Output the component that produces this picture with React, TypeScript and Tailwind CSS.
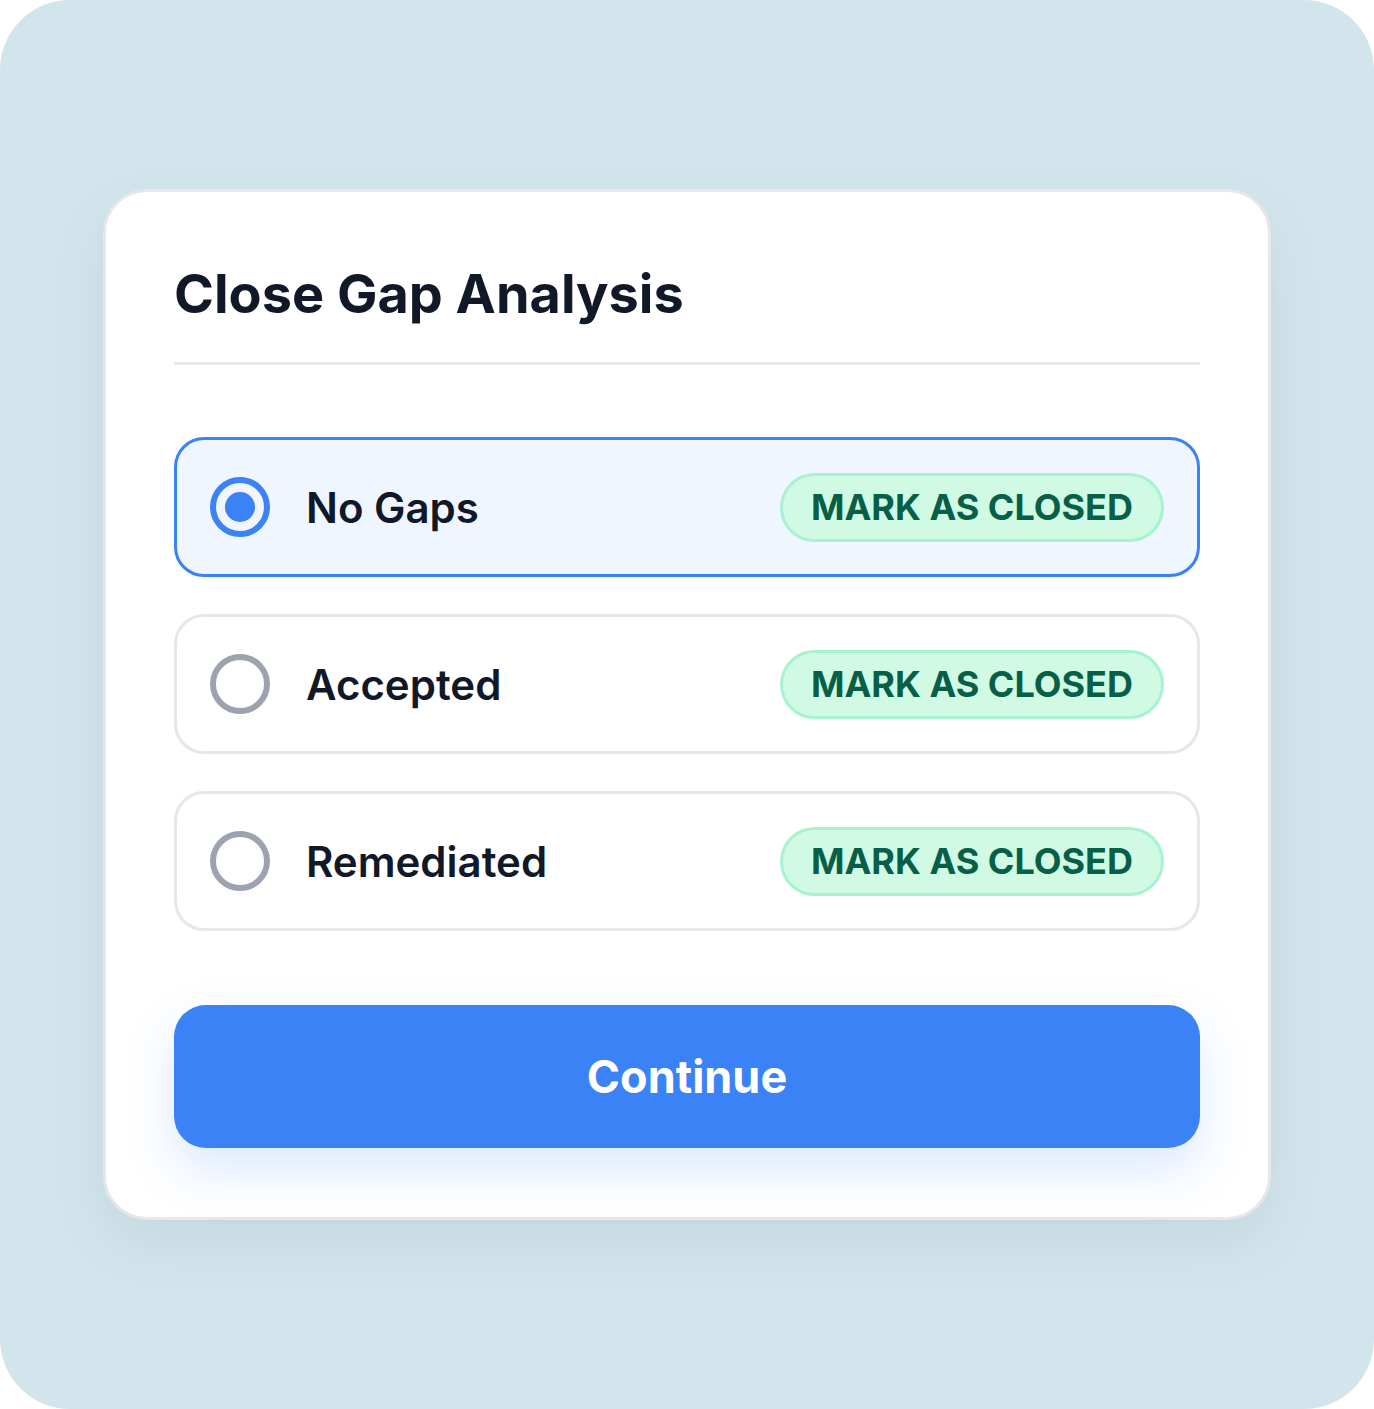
import { useState } from "react"

const options = ["No Gaps", "Accepted", "Remediated"]

export default function App() {
  const [selected, setSelected] = useState(0)

  return (
    <div className="w-[1374px] h-[1409px] bg-white font-['Inter',sans-serif]">
      <div className="w-full h-full rounded-[70px] bg-[#d3e5ec] flex items-center justify-center">
        <div className="w-[1168px] bg-white border-[3px] border-[#e5e7eb] rounded-[44px] px-[68px] pt-[69px] pb-[69px] shadow-[0_24px_60px_rgba(30,60,90,0.08)]">
          <div className="pb-[35px] border-b-[3px] border-[#e5e7eb]">
            <h1 className="text-[54px] leading-[1.24] font-bold text-[#111827]">Close Gap Analysis</h1>
          </div>

          <div className="mt-[72px] flex flex-col gap-[37px]">
            {options.map((label, i) => {
              const active = selected === i
              return (
                <div
                  key={label}
                  onClick={() => setSelected(i)}
                  className={`h-[140px] flex items-center px-[33px] rounded-[30px] border-[3px] cursor-pointer ${
                    active ? "border-[#3b82f6] bg-[#eff6ff]" : "border-[#e5e7eb] bg-white"
                  }`}
                >
                  <div
                    className={`w-[60px] h-[60px] rounded-full border-[6px] flex items-center justify-center shrink-0 ${
                      active ? "border-[#3b82f6]" : "border-[#9ca3af]"
                    }`}
                  >
                    {active && <div className="w-[30px] h-[30px] rounded-full bg-[#3b82f6]" />}
                  </div>
                  <span className="ml-[36px] text-[42px] font-semibold text-[#111827]">{label}</span>
                  <span className="ml-auto h-[69px] flex items-center px-[28px] rounded-full border-[3px] border-[#a7f3d0] bg-[#d1fae5] text-[36px] font-bold text-[#065f46] leading-none">
                    MARK AS CLOSED
                  </span>
                </div>
              )
            })}
          </div>

          <button className="mt-[74px] w-full h-[143px] rounded-[32px] bg-[#3b82f6] text-white text-[45px] font-bold shadow-[0_22px_50px_rgba(59,130,246,0.18)]">
            Continue
          </button>
        </div>
      </div>
    </div>
  )
}
